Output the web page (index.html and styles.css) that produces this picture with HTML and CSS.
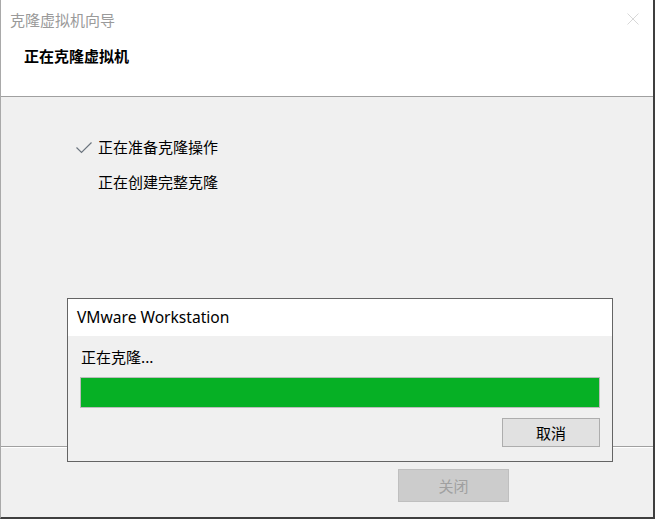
FILE: index.html
```html
<!DOCTYPE html>
<html lang="zh-CN">
<head>
<meta charset="utf-8">
<title>克隆虚拟机向导</title>
<link rel="stylesheet" href="styles.css">
</head>
<body>
<div class="window">
  <div class="titlebar">
    <span class="title">克隆虚拟机向导</span>
    <svg class="close" width="12" height="12" viewBox="0 0 12 12"><path d="M0.5 0.5L11.5 11.5M11.5 0.5L0.5 11.5" stroke="#d8d8d8" stroke-width="1" fill="none"/></svg>
  </div>
  <div class="header">正在克隆虚拟机</div>
  <div class="content">
    <div class="step">
      <svg class="check" width="16" height="16" viewBox="0 0 16 16"><path d="M0.5 8.5L5.5 13.5L15.5 3.5" stroke="#6b747e" stroke-width="1.2" fill="none"/></svg>
      <span>正在准备克隆操作</span>
    </div>
    <div class="step">
      <span class="check-space"></span>
      <span>正在创建完整克隆</span>
    </div>
  </div>
  <div class="footer">
    <button class="btn btn-disabled" disabled>关闭</button>
  </div>

  <div class="dialog">
    <div class="dialog-title">VMware Workstation</div>
    <div class="dialog-body">
      <div class="dialog-msg">正在克隆...</div>
      <div class="progress"><div class="progress-fill" style="width:100%"></div></div>
      <div class="dialog-actions">
        <button class="btn btn-cancel">取消</button>
      </div>
    </div>
  </div>
</div>
</body>
</html>
```

FILE: styles.css
```css
* { box-sizing: border-box; }
html, body { margin: 0; padding: 0; background: #ffffff; }
body {
  font-family: "Noto Sans CJK SC", "Noto Sans", sans-serif;
  font-size: 15px;
  color: #000;
}
.window {
  position: relative;
  width: 655px;
  height: 519px;
  border-left: 1px solid #a9a9a9;
  border-right: 2px solid #3f3f3f;
  border-bottom: 2px solid #3f3f3f;
  display: flex;
  flex-direction: column;
  background: #f0f0f0;
}
.titlebar {
  height: 40px;
  background: #fff;
  display: flex;
  align-items: center;
  justify-content: space-between;
  padding: 0 14px 0 9px;
}
.title {
  color: #9a9a9a;
  line-height: 20px;
}
.close { display: block; margin-top: -2px; }
.header {
  height: 57px;
  background: #fff;
  padding: 6px 0 0 23px;
  font-weight: bold;
  line-height: 20px;
  border-bottom: 1px solid #a0a0a0;
}
.content {
  flex: 1;
  padding: 40px 0 0 75px;
  display: flex;
  flex-direction: column;
  gap: 15px;
}
.step {
  display: flex;
  align-items: center;
  gap: 6px;
  line-height: 20px;
}
.check { display: block; margin-top: -1px; }
.check-space { width: 16px; height: 16px; }
.footer {
  height: 71px;
  border-top: 1px solid #a0a0a0;
  box-shadow: inset 0 1px 0 #ffffff;
  display: flex;
  justify-content: flex-end;
  align-items: flex-start;
  padding: 22px 144px 0 0;
}
.btn {
  font-family: "Noto Sans CJK SC", sans-serif;
  font-size: 15px;
  line-height: 20px;
  padding: 0;
  margin: 0;
}
.btn-disabled {
  width: 111px;
  height: 33px;
  background: #cccccc;
  border: 1px solid #bfbfbf;
  color: #a0a0a0;
}
.dialog {
  position: absolute;
  left: 66px;
  top: 298px;
  width: 546px;
  height: 164px;
  border: 1px solid #646464;
  background: #f0f0f0;
  display: flex;
  flex-direction: column;
}
.dialog-title {
  height: 37px;
  background: #fff;
  padding-left: 9px;
  font-family: "Noto Sans", sans-serif;
  font-size: 15.6px;
  line-height: 37px;
  color: #000;
}
.dialog-body {
  flex: 1;
  padding: 11px 12px 0 12px;
  display: flex;
  flex-direction: column;
}
.dialog-msg {
  line-height: 20px;
  padding-left: 1px;
}
.progress {
  margin-top: 10px;
  height: 31px;
  border: 1px solid #bcbcbc;
  background: #e6e6e6;
}
.progress-fill {
  height: 100%;
  background: #06b025;
}
.dialog-actions {
  display: flex;
  justify-content: flex-end;
  margin-top: 10px;
}
.btn-cancel {
  width: 98px;
  height: 29px;
  background: #e1e1e1;
  border: 1px solid #adadad;
  color: #000;
}
```
